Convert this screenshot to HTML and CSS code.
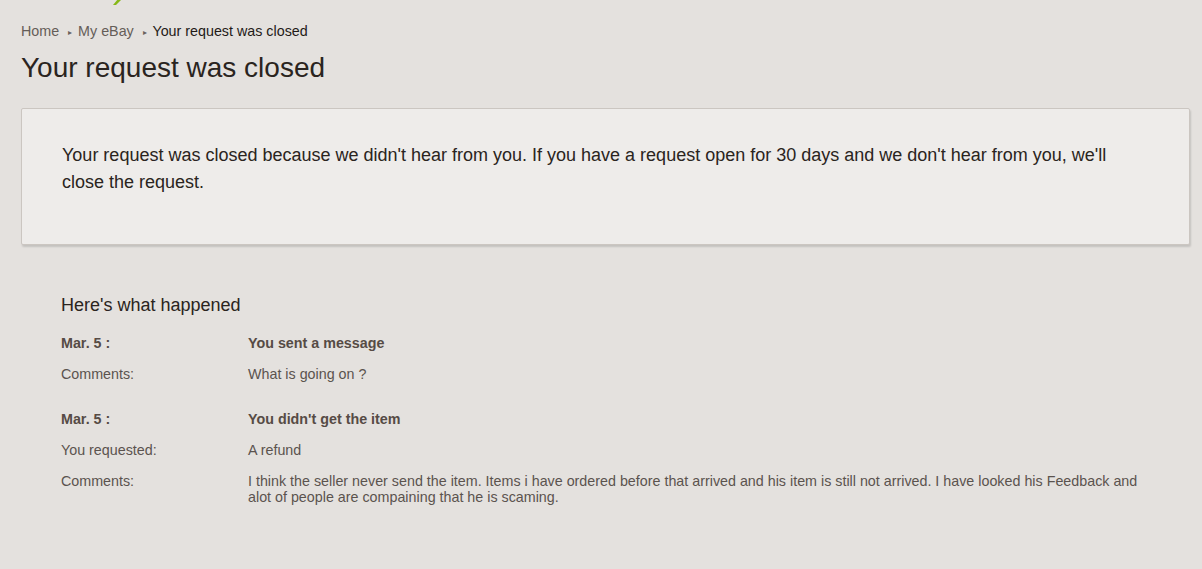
FILE: index.html
```html
<!DOCTYPE html>
<html lang="en">
<head>
    <meta charset="UTF-8">
    <title>Your request was closed</title>
    <link rel="stylesheet" href="styles.css">
</head>
<body>

    <div class="logo-tail">
        <svg width="12" height="8" viewBox="0 0 12 8"><path d="M2 6 L7 0 L11 0 L5 6 Z" fill="#86b817"/></svg>
    </div>

    <div class="breadcrumb">
        <a href="#">Home</a>
        <span class="sep">&#9656;</span>
        <a href="#">My eBay</a>
        <span class="sep">&#9656;</span>
        <span class="current">Your request was closed</span>
    </div>

    <h1>Your request was closed</h1>

    <div class="notice">
        <p>Your request was closed because we didn't hear from you. If you have a request open for 30 days and we don't hear from you, we'll close the request.</p>
    </div>

    <div class="history">
        <h3>Here's what happened</h3>

        <div class="event">
            <div class="row">
                <span class="label bold">Mar. 5 :</span>
                <span class="value bold">You sent a message</span>
            </div>
            <div class="row">
                <span class="label">Comments:</span>
                <span class="value">What is going on ?</span>
            </div>
        </div>

        <div class="event">
            <div class="row">
                <span class="label bold">Mar. 5 :</span>
                <span class="value bold">You didn't get the item</span>
            </div>
            <div class="row">
                <span class="label">You requested:</span>
                <span class="value">A refund</span>
            </div>
            <div class="row">
                <span class="label">Comments:</span>
                <span class="value">I think the seller never send the item. Items i have ordered before that arrived and his item is still not arrived. I have looked his Feedback and alot of people are compaining that he is scaming.</span>
            </div>
        </div>
    </div>

</body>
</html>
```

FILE: styles.css
```css
body {
    font-family: "Liberation Sans", Arial, sans-serif;
    background-color: #e4e1de;
    color: #5b534e;
    margin: 0;
    padding: 0 12px 0 21px;
    position: relative;
}
.logo-tail {
    position: absolute;
    left: 111px;
    top: -1px;
    line-height: 0;
}
.breadcrumb {
    padding-top: 22px;
    font-size: 14.3px;
    line-height: 18px;
}
.breadcrumb a {
    color: #645d58;
    text-decoration: none;
}
.breadcrumb .sep {
    font-size: 8px;
    color: #6a625d;
    margin: 0 2px 0 5px;
    vertical-align: 1px;
}
.breadcrumb .current {
    color: #1f1a17;
}
h1 {
    font-size: 28px;
    font-weight: normal;
    line-height: 32px;
    color: #2a2420;
    margin: 10px 0 24px 0;
}
.notice {
    background: #eeecea;
    border: 1px solid #cbc6c1;
    border-radius: 2px;
    box-shadow: 1px 2px 2px rgba(0, 0, 0, 0.14);
    padding: 33px 50px 48px 40px;
}
.notice p {
    margin: 0;
    font-size: 18px;
    line-height: 27px;
    color: #2a2420;
}
.history {
    padding: 50px 40px 0 40px;
}
.history h3 {
    font-size: 18px;
    font-weight: normal;
    line-height: 20px;
    color: #2a2420;
    margin: 0 0 20px 0;
}
.event {
    margin-bottom: 29px;
}
.row {
    display: grid;
    grid-template-columns: 187px 1fr;
    font-size: 14.3px;
    line-height: 16px;
    margin-bottom: 15px;
}
.bold {
    font-weight: bold;
    color: #564b45;
}
.value {
    max-width: 902px;
}
```
